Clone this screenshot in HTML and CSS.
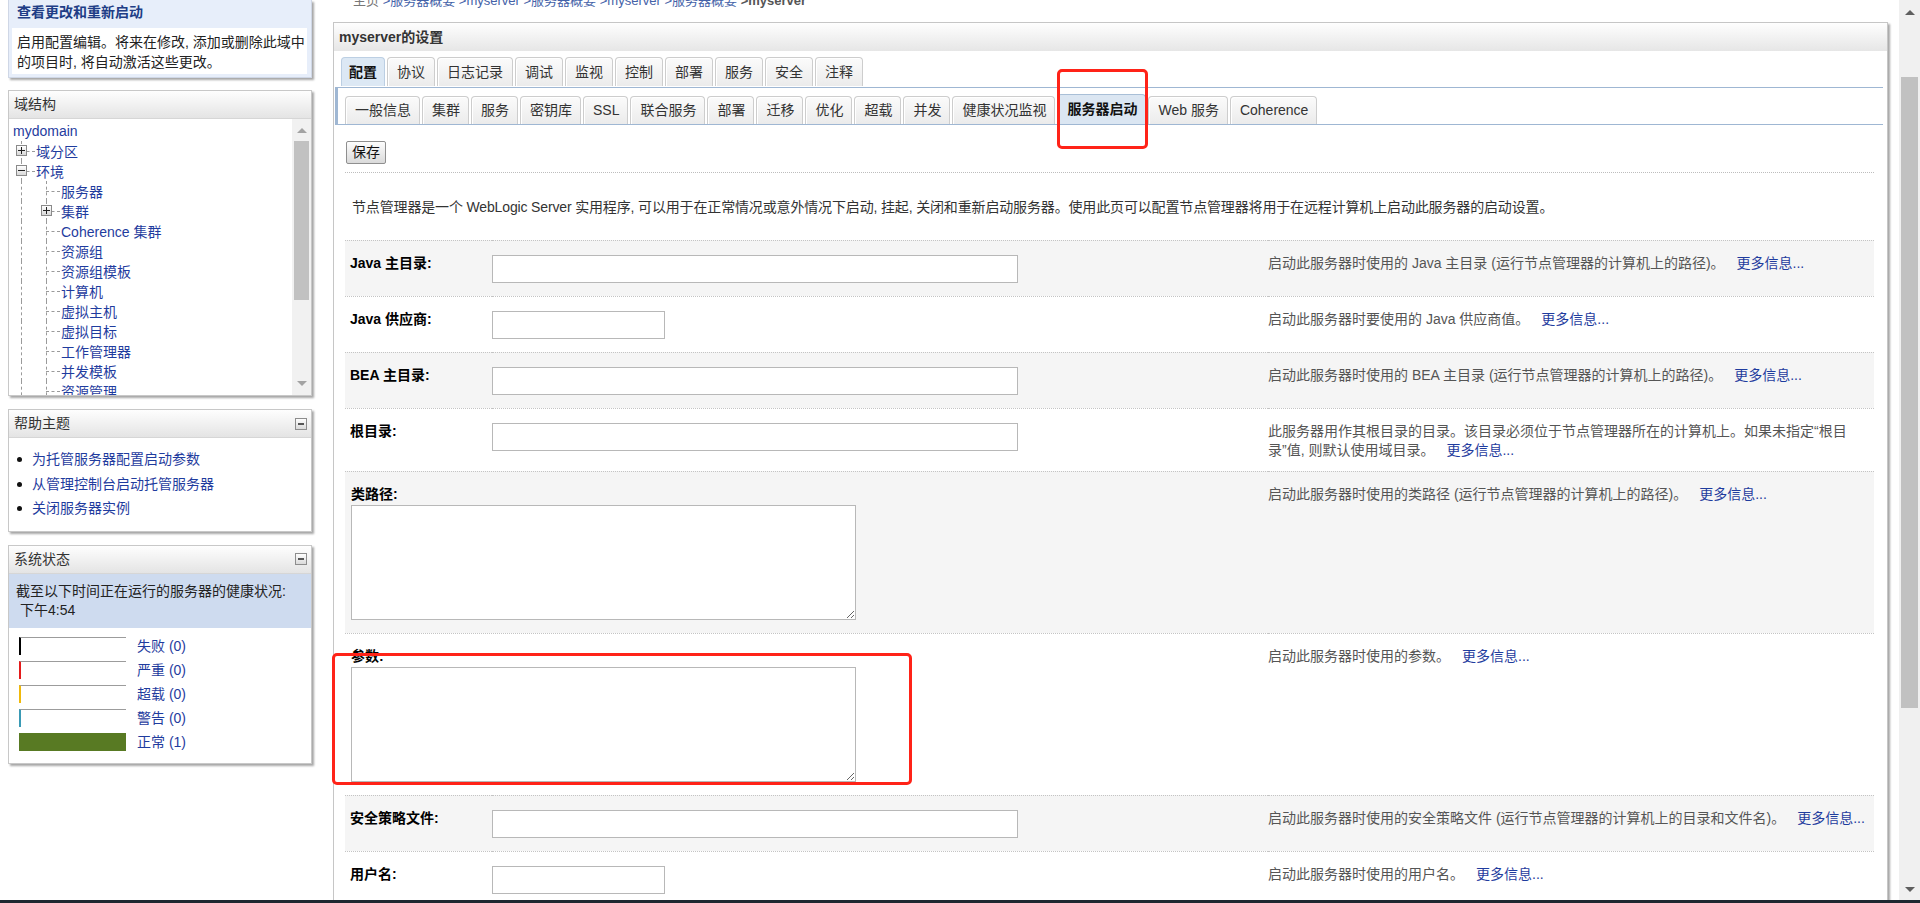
FILE: index.html
```html
<!DOCTYPE html>
<html lang="zh-CN">
<head>
<meta charset="utf-8">
<title>myserver的设置</title>
<link rel="stylesheet" href="styles.css">
</head>
<body>
<div class="screen">
  <aside class="sidebar">
    <section class="panel changes">
      <div class="changes-head">查看更改和重新启动</div>
      <div class="changes-body">启用配置编辑。将来在修改, 添加或删除此域中<br>的项目时, 将自动激活这些更改。</div>
    </section>

    <section class="panel">
      <div class="panel-head"><span>域结构</span></div>
      <div class="tree-wrap">
        <div class="tree">
          <div class="node root"><a>mydomain</a></div>
          <div class="node"><span class="cell v h"><i class="box plus"></i></span><a class="lbl">域分区</a></div>
          <div class="node"><span class="cell v h"><i class="box"></i></span><a class="lbl">环境</a></div>
          <div class="node"><span class="cell v"></span><span class="cell v h"></span><a class="lbl">服务器</a></div>
          <div class="node"><span class="cell v"></span><span class="cell v h"><i class="box plus"></i></span><a class="lbl">集群</a></div>
          <div class="node"><span class="cell v"></span><span class="cell v h"></span><a class="lbl">Coherence 集群</a></div>
          <div class="node"><span class="cell v"></span><span class="cell v h"></span><a class="lbl">资源组</a></div>
          <div class="node"><span class="cell v"></span><span class="cell v h"></span><a class="lbl">资源组模板</a></div>
          <div class="node"><span class="cell v"></span><span class="cell v h"></span><a class="lbl">计算机</a></div>
          <div class="node"><span class="cell v"></span><span class="cell v h"></span><a class="lbl">虚拟主机</a></div>
          <div class="node"><span class="cell v"></span><span class="cell v h"></span><a class="lbl">虚拟目标</a></div>
          <div class="node"><span class="cell v"></span><span class="cell v h"></span><a class="lbl">工作管理器</a></div>
          <div class="node"><span class="cell v"></span><span class="cell v h"></span><a class="lbl">并发模板</a></div>
          <div class="node"><span class="cell v"></span><span class="cell v h"></span><a class="lbl">资源管理</a></div>
        </div>
        <div class="mini-scroll">
          <div class="ms-btn"><i class="tri-up small"></i></div>
          <div class="ms-thumb"></div>
          <div class="ms-fill"></div>
          <div class="ms-btn down"><i class="tri-down small"></i></div>
        </div>
      </div>
    </section>

    <section class="panel">
      <div class="panel-head"><span>帮助主题</span><i class="collapse"></i></div>
      <ul class="help-list">
        <li><a>为托管服务器配置启动参数</a></li>
        <li><a>从管理控制台启动托管服务器</a></li>
        <li><a>关闭服务器实例</a></li>
      </ul>
    </section>

    <section class="panel">
      <div class="panel-head"><span>系统状态</span><i class="collapse"></i></div>
      <div class="status-note">截至以下时间正在运行的服务器的健康状况:<br><span class="time">下午4:54</span></div>
      <div class="health-list">
        <div class="health"><span class="hbar fail"></span><a>失败 (0)</a></div>
        <div class="health"><span class="hbar crit"></span><a>严重 (0)</a></div>
        <div class="health"><span class="hbar over"></span><a>超载 (0)</a></div>
        <div class="health"><span class="hbar warn"></span><a>警告 (0)</a></div>
        <div class="health"><span class="hbar ok"></span><a>正常 (1)</a></div>
      </div>
    </section>
  </aside>

  <main class="main">
    <div class="crumbs"><span class="crumbs-line"><span class="home">主页</span> <a>&gt;服务器概要</a> <a>&gt;myserver</a> <a>&gt;服务器概要</a> <a>&gt;myserver</a> <a>&gt;服务器概要</a> <b>&gt;myserver</b></span></div>

    <section class="settings">
      <div class="settings-head">myserver的设置</div>
      <nav class="tabs">
        <span class="tab active">配置</span>
        <span class="tab">协议</span>
        <span class="tab">日志记录</span>
        <span class="tab">调试</span>
        <span class="tab">监视</span>
        <span class="tab">控制</span>
        <span class="tab">部署</span>
        <span class="tab">服务</span>
        <span class="tab">安全</span>
        <span class="tab">注释</span>
      </nav>
      <nav class="subtabs">
        <span class="tab">一般信息</span>
        <span class="tab">集群</span>
        <span class="tab">服务</span>
        <span class="tab">密钥库</span>
        <span class="tab">SSL</span>
        <span class="tab">联合服务</span>
        <span class="tab">部署</span>
        <span class="tab">迁移</span>
        <span class="tab">优化</span>
        <span class="tab">超载</span>
        <span class="tab">并发</span>
        <span class="tab">健康状况监视</span>
        <span class="tab sub-active">服务器启动</span>
        <span class="tab">Web 服务</span>
        <span class="tab">Coherence</span>
      </nav>

      <div class="content">
        <div class="savebar"><button class="btn" type="button">保存</button></div>
        <p class="intro">节点管理器是一个 WebLogic Server 实用程序, 可以用于在正常情况或意外情况下启动, 挂起, 关闭和重新启动服务器。使用此页可以配置节点管理器将用于在远程计算机上启动此服务器的启动设置。</p>

        <table class="form">
          <colgroup><col class="c-label"><col class="c-field"><col></colgroup>
          <tr class="alt">
            <td class="lab">Java 主目录:</td>
            <td class="fld"><input class="inp" type="text"></td>
            <td class="desc">启动此服务器时使用的 Java 主目录 (运行节点管理器的计算机上的路径)。<a>更多信息...</a></td>
          </tr>
          <tr>
            <td class="lab">Java 供应商:</td>
            <td class="fld"><input class="inp short" type="text"></td>
            <td class="desc">启动此服务器时要使用的 Java 供应商值。<a>更多信息...</a></td>
          </tr>
          <tr class="alt">
            <td class="lab">BEA 主目录:</td>
            <td class="fld"><input class="inp" type="text"></td>
            <td class="desc">启动此服务器时使用的 BEA 主目录 (运行节点管理器的计算机上的路径)。<a>更多信息...</a></td>
          </tr>
          <tr>
            <td class="lab">根目录:</td>
            <td class="fld"><input class="inp" type="text"></td>
            <td class="desc">此服务器用作其根目录的目录。该目录必须位于节点管理器所在的计算机上。如果未指定“根目<br>录”值, 则默认使用域目录。<a>更多信息...</a></td>
          </tr>
          <tr class="alt">
            <td class="tall" colspan="2"><span class="lab2">类路径:</span><textarea class="ta"></textarea></td>
            <td class="desc">启动此服务器时使用的类路径 (运行节点管理器的计算机上的路径)。<a>更多信息...</a></td>
          </tr>
          <tr>
            <td class="tall" colspan="2"><span class="lab2">参数:</span><textarea class="ta"></textarea></td>
            <td class="desc">启动此服务器时使用的参数。<a>更多信息...</a></td>
          </tr>
          <tr class="alt">
            <td class="lab">安全策略文件:</td>
            <td class="fld"><input class="inp" type="text"></td>
            <td class="desc">启动此服务器时使用的安全策略文件 (运行节点管理器的计算机上的目录和文件名)。<a>更多信息...</a></td>
          </tr>
          <tr>
            <td class="lab">用户名:</td>
            <td class="fld"><input class="inp short" type="text"></td>
            <td class="desc">启动此服务器时使用的用户名。<a>更多信息...</a></td>
          </tr>
        </table>
      </div>
    </section>
  </main>

  <div class="vscroll">
    <div class="sb-up"><i class="tri-up"></i></div>
    <div class="sb-gap"></div>
    <div class="sb-thumb"></div>
    <div class="sb-fill"></div>
    <div class="sb-down"><i class="tri-down"></i></div>
  </div>
</div>
<div class="taskbar"></div>

<div class="mark mark-tab"></div>
<div class="mark mark-args"></div>
</body>
</html>
```

FILE: styles.css
```css
* { box-sizing: border-box; }
html, body { margin: 0; padding: 0; }
body {
  width: 1920px;
  height: 903px;
  overflow: hidden;
  position: relative;
  background: #fff;
  font-family: "Liberation Sans", "Noto Sans CJK SC", sans-serif;
  font-size: 14px;
  color: #222;
}
a { color: #1f3c9e; text-decoration: none; cursor: pointer; }

.screen { display: flex; height: 900px; overflow: hidden; }

/* ---------- sidebar ---------- */
.sidebar { width: 330px; flex: none; padding-left: 8px; }
.panel {
  width: 304px;
  background: #fff;
  border: 1px solid #c8c8c8;
  box-shadow: 2px 2px 2px rgba(0, 0, 0, 0.35);
  margin-bottom: 13px;
}
.changes {
  background: #e7eefa;
  border-color: #cfd7e6;
  border-top: none;
  padding: 0 4px 3px 3px;
  margin-bottom: 12px;
}
.changes-head {
  height: 28px;
  padding: 2px 0 0 5px;
  line-height: 20px;
  font-weight: bold;
  color: #203d86;
}
.changes-body {
  background: #fff;
  padding: 4px 5px 2px;
  line-height: 20px;
  color: #222;
  white-space: nowrap;
}

.panel-head {
  height: 28px;
  line-height: 27px;
  padding: 0 4px 0 5px;
  color: #333;
  background: linear-gradient(#fefefe, #e4e4e4);
  border-bottom: 1px solid #d6d6d6;
  display: flex;
  justify-content: space-between;
  align-items: center;
}
.collapse {
  width: 12px;
  height: 12px;
  border: 1px solid #8d8d8d;
  background: linear-gradient(#fdfdfd, #dadada);
  position: relative;
}
.collapse::before {
  content: "";
  position: absolute;
  left: 2px; right: 2px; top: 4px;
  height: 2px;
  background: #555;
}

/* tree */
.tree-wrap { display: flex; height: 276px; }
.tree { flex: 1; padding-top: 2px; overflow: hidden; }
.node { height: 20px; display: flex; align-items: center; white-space: nowrap; }
.node.root { padding-left: 4px; }
.cell { width: 25px; height: 20px; flex: none; position: relative; }
.cell.v::before {
  content: "";
  position: absolute;
  left: 12px; top: 0; bottom: 0;
  border-left: 1px dashed #9a9a9a;
}
.cell.h::after {
  content: "";
  position: absolute;
  left: 12px; right: -1px; top: 10px;
  border-top: 1px dashed #9a9a9a;
}
.box {
  position: absolute;
  left: 7px; top: 4px;
  width: 11px; height: 11px;
  border: 1px solid #8a8a8a;
  background: linear-gradient(#fff, #d8d8d8);
  z-index: 1;
}
.box::before {
  content: "";
  position: absolute;
  left: 1px; right: 1px; top: 4px;
  height: 1px;
  background: #222;
}
.box.plus::after {
  content: "";
  position: absolute;
  top: 1px; bottom: 1px; left: 4px;
  width: 1px;
  background: #222;
}
.lbl { margin-left: 2px; }

.mini-scroll {
  width: 19px;
  flex: none;
  background: #f1f1f1;
  display: flex;
  flex-direction: column;
  align-items: center;
}
.ms-btn { height: 22px; width: 100%; display: flex; align-items: center; justify-content: center; flex: none; }
.ms-btn.down { height: 23px; }
.ms-thumb { width: 15px; height: 159px; background: #c1c1c1; flex: none; }
.ms-fill { flex: 1; }

.tri-up, .tri-down {
  width: 0; height: 0;
  border-left: 5px solid transparent;
  border-right: 5px solid transparent;
}
.tri-up { border-bottom: 5px solid #5f5f5f; }
.tri-down { border-top: 5px solid #5f5f5f; }
.tri-up.small { border-bottom-color: #a3a3a3; }
.tri-down.small { border-top-color: #a3a3a3; }

/* help */
.help-list { list-style: none; margin: 0; padding: 9px 0 10px; }
.help-list li { position: relative; padding-left: 23px; line-height: 24.5px; white-space: nowrap; }
.help-list li::before {
  content: "";
  position: absolute;
  left: 8px; top: 10px;
  width: 5px; height: 5px;
  border-radius: 50%;
  background: #111;
}

/* status */
.status-note {
  background: #cedbef;
  padding: 8px 4px 8px 7px;
  line-height: 19px;
  color: #222;
  white-space: nowrap;
}
.status-note .time { display: inline-block; margin-left: 4px; }
.health-list { padding: 9px 10px 6px; }
.health { display: flex; height: 24px; }
.hbar {
  width: 107px; height: 18px;
  flex: none;
  border-top: 1px solid #9c9c9c;
  border-left: 2px solid #000;
}
.hbar.crit { border-left-color: #e41b1b; }
.hbar.over { border-left-color: #f0b90b; }
.hbar.warn { border-left-color: #3a9ab5; }
.hbar.ok { background: #587a23; border: none; }
.health a { margin-left: 11px; line-height: 18px; }

/* ---------- main ---------- */
.main { flex: 1; min-width: 0; padding: 0 11px 0 3px; overflow: hidden; }
.crumbs { height: 22px; overflow: hidden; padding-left: 20px; font-size: 13px; color: #777; }
.crumbs-line { display: block; margin-top: -7px; line-height: 16px; white-space: nowrap; }
.crumbs a { color: #4462a8; }
.crumbs b { color: #555; }

.settings {
  border: 1px solid #c6c6c6;
  box-shadow: 2px 2px 2px rgba(0, 0, 0, 0.35);
  background: #fff;
  min-height: 940px;
}
.settings-head {
  height: 28px;
  line-height: 28px;
  padding-left: 5px;
  font-weight: bold;
  color: #333;
  background: linear-gradient(#fefefe, #e6e6e6);
}

.tabs { display: flex; align-items: flex-end; padding: 6px 0 0 7px; }
.tab {
  height: 29px;
  line-height: 28px;
  padding: 0 9px;
  margin-right: 2px;
  border: 1px solid #cdcdcd;
  border-bottom: none;
  border-radius: 4px 4px 0 0;
  background: linear-gradient(#fbfbfb, #ebebeb);
  box-shadow: inset 1px 1px 0 #fff;
  color: #333;
  white-space: nowrap;
  flex: none;
}
.tab.active {
  background: #dce8f4;
  border-color: #bccfe3;
  font-weight: bold;
  color: #111;
  padding: 0 7px;
  box-shadow: none;
}
.subtabs {
  display: flex;
  align-items: flex-end;
  margin: 1px 4px 0 1px;
  padding: 6px 0 0 7px;
  border-top: 1px solid #9fb7d3;
  border-bottom: 1px solid #9fb7d3;
  border-left: 3px solid #9fb7d3;
}
.subtabs .tab {
  height: 28px;
  line-height: 26px;
  padding: 0 8px 0 9px;
}
.subtabs .tab.sub-active {
  height: 30px;
  line-height: 28px;
  background: #dbe6f2;
  border-color: #a9bfd7;
  font-weight: bold;
  color: #111;
  box-shadow: none;
}

.content { padding: 16px 13px 0 11px; }
.savebar { padding: 0 0 8px 1px; border-bottom: 1px dotted #bdbdbd; }
.btn {
  display: block;
  height: 23px;
  padding: 0 5px;
  border: 1px solid #8f8f8f;
  border-radius: 2px;
  background: linear-gradient(#fdfdfd, #dadada);
  font-family: inherit;
  font-size: 14px;
  line-height: 21px;
  color: #111;
}
.intro { margin: 25px 0 23px 7px; line-height: 19px; color: #333; white-space: nowrap; letter-spacing: -0.15px; }

.form { width: 100%; border-collapse: separate; border-spacing: 0; table-layout: fixed; }
.c-label { width: 147px; }
.c-field { width: 776px; }
.form td { border-top: 1px dotted #c4c4c4; vertical-align: top; padding: 0; }
.form tr.alt td { background: #f5f5f5; }
.form .lab { padding: 13px 0 0 5px; font-weight: bold; line-height: 19px; color: #000; white-space: nowrap; }
.form .fld { padding: 14px 0 13px; }
.form .desc { padding: 13px 4px 11px 0; line-height: 19px; color: #555; }
.desc a { margin-left: 12px; white-space: nowrap; }
.inp {
  display: block;
  width: 526px;
  height: 28px;
  margin: 0;
  padding: 0;
  border: 1px solid #b8b8b8;
  background: #fff;
}
.inp.short { width: 173px; }
.form .tall { padding: 13px 0 13px 6px; }
.lab2 { display: block; font-weight: bold; line-height: 19px; color: #000; }
.ta {
  display: block;
  width: 505px;
  height: 115px;
  margin: 1px 0 0;
  padding: 0;
  border: 1px solid #b8b8b8;
  background: #fff;
  resize: both;
}

/* page scrollbar */
.vscroll {
  width: 21px;
  flex: none;
  background: #f0f0f0;
  display: flex;
  flex-direction: column;
  align-items: center;
}
.sb-up { height: 25px; width: 100%; flex: none; display: flex; align-items: center; justify-content: center; }
.sb-gap { height: 52px; flex: none; }
.sb-thumb { width: 17px; height: 631px; flex: none; background: #c1c1c1; }
.sb-fill { flex: 1; }
.sb-down { height: 22px; width: 100%; flex: none; display: flex; align-items: center; justify-content: center; }

.taskbar { height: 3px; background: #1e2730; }

/* annotation marks */
.mark {
  position: absolute;
  border: 3px solid #ff2318;
  border-radius: 5px;
  pointer-events: none;
}
.mark-tab { left: 1057px; top: 69px; width: 91px; height: 80px; }
.mark-args { left: 332px; top: 653px; width: 580px; height: 132px; }
```
